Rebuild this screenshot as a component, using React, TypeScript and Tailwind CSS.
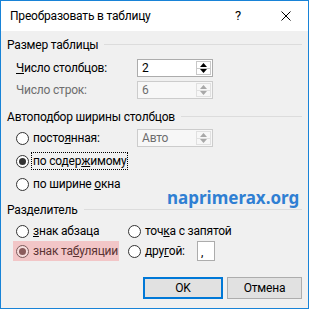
import React from "react";

const font = { fontFamily: 'Roboto, "Noto Sans", sans-serif' };

function Spin({ value, disabled }: { value: string; disabled?: boolean }) {
  const arrow = disabled ? "#a8a8a8" : "#000";
  return (
    <div
      className={`flex h-[18px] w-[76px] border ${disabled ? "border-[#cccccc] bg-[#f7f7f7]" : "border-[#acacac] bg-white"}`}
    >
      <div className={`flex flex-1 items-center pl-[4px] text-[12px] ${disabled ? "text-[#6d6d6d]" : "text-black"}`}>{value}</div>
      <div className={`my-[1px] mr-[1px] flex w-[15px] flex-col border ${disabled ? "border-[#e0e0e0]" : "border-[#c8c8c8]"}`}>
        <div className={`flex flex-1 items-center justify-center border-b ${disabled ? "border-[#e0e0e0]" : "border-[#c8c8c8]"}`}>
          <svg width="7" height="4" viewBox="0 0 7 4"><path d="M0 4 L3.5 0 L7 4 Z" fill={arrow} /></svg>
        </div>
        <div className="flex flex-1 items-center justify-center">
          <svg width="7" height="4" viewBox="0 0 7 4"><path d="M0 0 L3.5 4 L7 0 Z" fill={arrow} /></svg>
        </div>
      </div>
    </div>
  );
}

function Radio({ checked, tint }: { checked?: boolean; tint?: boolean }) {
  return (
    <div
      className={`flex h-[13px] w-[13px] shrink-0 items-center justify-center rounded-full border ${tint ? "border-[#7a5a5a] bg-[#f6dcdc]" : "border-[#333333] bg-white"}`}
    >
      {checked && <div className={`h-[7px] w-[7px] rounded-full ${tint ? "bg-[#8a5c5c]" : "bg-[#333333]"}`} />}
    </div>
  );
}

function GroupHeader({ title }: { title: string }) {
  return (
    <div className="flex h-[15px] items-center">
      <span className="whitespace-nowrap text-[12px] leading-none text-black">{title}</span>
      <div className="ml-[6px] h-px flex-1 bg-[#dcdcdc]" />
    </div>
  );
}

export default function App() {
  return (
    <div className="relative flex h-[309px] w-[309px] flex-col whitespace-nowrap border border-[#1883d7] bg-[#f0f0f0] tracking-[-0.2px]" style={font}>
      {/* Title bar */}
      <div className="flex h-[30px] items-center bg-white">
        <span className="ml-[9px] text-[12px] text-black">Преобразовать в таблицу</span>
        <span className="ml-auto mr-[40px] text-[13px] text-black">?</span>
        <svg className="mr-[17px]" width="10" height="10" viewBox="0 0 10 10">
          <path d="M0.5 0.5 L9.5 9.5 M9.5 0.5 L0.5 9.5" stroke="#000" strokeWidth="1" />
        </svg>
      </div>

      {/* Body */}
      <div className="flex flex-1 flex-col pl-[6px] pr-[6px] text-[12px] text-black">
        <div className="mt-[6px]">
          <GroupHeader title="Размер таблицы" />
        </div>
        <div className="mt-[7px] flex h-[18px] items-center pl-[9px]">
          <span className="w-[121px]"><u>Ч</u>исло столбцов:</span>
          <Spin value="2" />
        </div>
        <div className="mt-[4px] flex h-[18px] items-center pl-[9px]">
          <span className="w-[121px] text-[#6d6d6d]">Число строк:</span>
          <Spin value="6" disabled />
        </div>

        <div className="mt-[10px]">
          <GroupHeader title="Автоподбор ширины столбцов" />
        </div>
        <div className="mt-[5px] flex h-[18px] items-center pl-[9px]">
          <div className="flex w-[121px] items-center">
            <Radio />
            <span className="ml-[4px]">посто<u>я</u>нная:</span>
          </div>
          <Spin value="Авто" disabled />
        </div>
        <div className="mt-[5px] flex h-[18px] items-center pl-[9px]">
          <Radio checked />
          <span className="ml-[2px] flex h-[18px] items-center border border-dotted border-black px-[1px]">
            по содер<u>ж</u>имому
          </span>
        </div>
        <div className="mt-[5px] flex h-[18px] items-center pl-[9px]">
          <Radio />
          <span className="ml-[4px]">по ширине <u>о</u>кна</span>
        </div>

        <div className="mt-[9px]">
          <GroupHeader title="Разделитель" />
        </div>
        <div className="mt-[5px] flex h-[18px] items-center pl-[9px]">
          <div className="flex w-[112px] items-center">
            <Radio />
            <span className="ml-[4px]"><u>з</u>нак абзаца</span>
          </div>
          <Radio />
          <span className="ml-[4px]">точ<u>к</u>а с запятой</span>
        </div>
        <div className="mt-[1px] flex h-[20px] items-center pl-[6px]">
          <div className="flex h-[20px] w-[106px] shrink-0 items-center bg-[#f2c6c7] pl-[3px] text-[#5a3434]">
            <Radio checked tint />
            <span className="ml-[4px]">знак та<u>б</u>уляции</span>
          </div>
          <div className="ml-[9px] flex items-center">
            <Radio />
            <span className="ml-[4px] w-[52px]">дру<u>г</u>ой:</span>
          </div>
          <div className="flex h-[20px] w-[18px] items-end border border-[#acacac] bg-white pb-[2px] pl-[3px] leading-none">,</div>
        </div>

        <div className="mt-[16px] flex h-[22px] justify-end gap-[4px]">
          <button className="flex h-[22px] w-[80px] items-center justify-center border-2 border-[#0078d7] bg-[#e1e1e1] text-[12px] text-black">
            OK
          </button>
          <button className="flex h-[22px] w-[75px] items-center justify-center border border-[#adadad] bg-[#e1e1e1] text-[12px] text-black">
            Отмена
          </button>
        </div>
      </div>

      {/* watermark */}
      <div className="absolute left-[166px] top-[188px] text-[17px] font-bold leading-none tracking-normal text-[#2f7fd3]" style={{ fontFamily: '"Noto Sans", "Open Sans", sans-serif' }}>
        naprimerax.org
      </div>
    </div>
  );
}
